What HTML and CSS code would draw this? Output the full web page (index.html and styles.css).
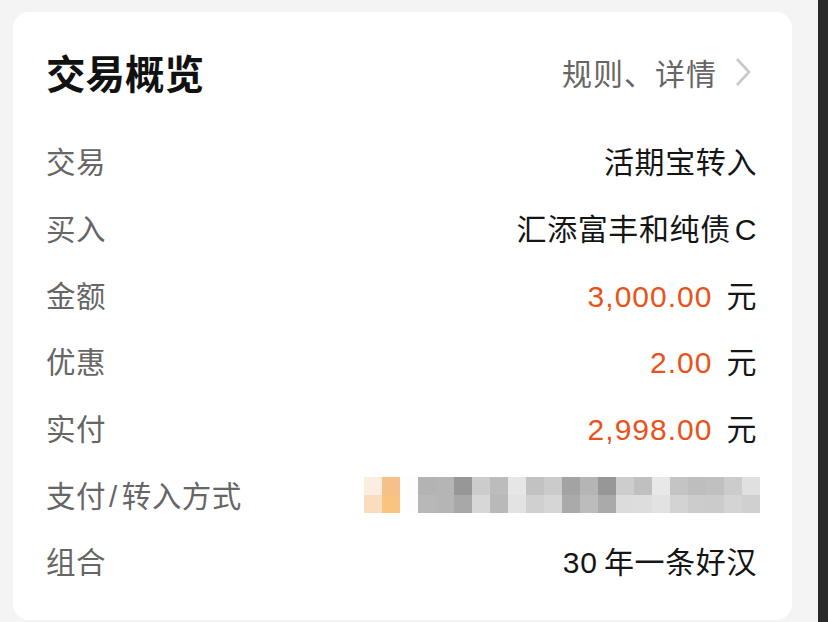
FILE: index.html
```html
<!DOCTYPE html>
<html lang="zh-CN">
<head>
<meta charset="utf-8">
<link rel="stylesheet" href="styles.css">
</head>
<body>
<div class="screen">
  <main class="main">
    <section class="card">
      <header class="card-head">
        <h1 class="title">交易概览</h1>
        <a class="more">规则、详情<svg class="chev" width="18" height="30" viewBox="0 0 18 30"><path d="M3 2 L15 15 L3 28" fill="none" stroke="#c9c9c9" stroke-width="2.6" stroke-linejoin="miter"/></svg></a>
      </header>
      <div class="rows">
        <div class="row"><span class="label">交易</span><span class="value">活期宝转入</span></div>
        <div class="row"><span class="label">买入</span><span class="value">汇添富丰和纯债<span class="latin">C</span></span></div>
        <div class="row"><span class="label">金额</span><span class="value"><span class="num">3,000.00</span>元</span></div>
        <div class="row"><span class="label">优惠</span><span class="value"><span class="num">2.00</span>元</span></div>
        <div class="row"><span class="label">实付</span><span class="value"><span class="num">2,998.00</span>元</span></div>
        <div class="row"><span class="label">支付<span class="slash">/</span>转入方式</span>
          <div class="mosaic">
            <span style="background:#fbeee0"></span><span style="background:#f5c08a"></span><span style="background:#fdfdfd"></span><span style="background:#b3b3b3"></span><span style="background:#b5b5b5"></span><span style="background:#979797"></span><span style="background:#cccccc"></span><span style="background:#bcbcbc"></span><span style="background:#e6e6e6"></span><span style="background:#c2c2c2"></span><span style="background:#cbcbcb"></span><span style="background:#a3a3a3"></span><span style="background:#b5b5b5"></span><span style="background:#979797"></span><span style="background:#cdcdcd"></span><span style="background:#c0c0c0"></span><span style="background:#e8e8e8"></span><span style="background:#c4c4c4"></span><span style="background:#bebebe"></span><span style="background:#c0c0c0"></span><span style="background:#cccccc"></span><span style="background:#e0e0e0"></span>
            <span style="background:#fadcc0"></span><span style="background:#f7c57f"></span><span style="background:#fdfdfd"></span><span style="background:#b8b8b8"></span><span style="background:#b5b5b5"></span><span style="background:#a8a8a8"></span><span style="background:#d7d7d7"></span><span style="background:#b9b9b9"></span><span style="background:#e3e3e3"></span><span style="background:#d0d0d0"></span><span style="background:#d6d6d6"></span><span style="background:#aaaaaa"></span><span style="background:#bcbcbc"></span><span style="background:#aaaaaa"></span><span style="background:#dcdcdc"></span><span style="background:#dddddd"></span><span style="background:#e2e2e2"></span><span style="background:#d3d3d3"></span><span style="background:#cccccc"></span><span style="background:#cbcbcb"></span><span style="background:#d4d4d4"></span><span style="background:#d0d0d0"></span>
          </div>
        </div>
        <div class="row"><span class="label">组合</span><span class="value"><span class="digits">30</span>年一条好汉</span></div>
      </div>
    </section>
  </main>
  <div class="edge"></div>
</div>
</body>
</html>
```

FILE: styles.css
```css
* { box-sizing: border-box; }
html, body { margin: 0; padding: 0; }
body {
  width: 828px;
  height: 622px;
  overflow: hidden;
  background: #f4f4f4;
  font-family: "Noto Sans CJK SC", "Noto Sans", sans-serif;
}
.screen {
  display: flex;
  height: 622px;
}
.main {
  width: 818px;
  padding: 12px 26px 2px 13px;
  background: #f4f4f4;
}
.edge {
  width: 10px;
  background: #2a2a2a;
}
.card {
  background: #ffffff;
  border-radius: 16px;
  height: 608px;
  padding: 34px 35px 0 33px;
}
.card-head {
  display: flex;
  align-items: center;
  justify-content: space-between;
  height: 52px;
  margin-bottom: 29px;
}
.title {
  margin: 0;
  font-size: 39.5px;
  font-weight: 700;
  color: #111111;
  line-height: 52px;
}
.more {
  display: flex;
  align-items: center;
  gap: 17px;
  font-size: 30px;
  color: #666666;
  letter-spacing: 1px;
  margin-right: 5px;
}
.chev { display: block; }
.rows {
  display: flex;
  flex-direction: column;
}
.row {
  display: flex;
  align-items: center;
  justify-content: space-between;
  height: 66.67px;
}
.label {
  font-size: 29.5px;
  color: #666666;
  letter-spacing: 0.5px;
}
.slash {
  font-family: "Liberation Sans", sans-serif;
  margin: 0 4px 0 3px;
}
.value {
  font-size: 30px;
  color: #151515;
  letter-spacing: 0.6px;
  white-space: pre;
}
.latin {
  font-family: "Liberation Sans", sans-serif;
  margin-left: 4px;
}
.num {
  font-family: "Liberation Sans", sans-serif;
  color: #e8531c;
  letter-spacing: 1px;
  margin-right: 14px;
}
.digits {
  font-family: "Liberation Sans", sans-serif;
  letter-spacing: 1px;
  margin-right: 6px;
}
.mosaic {
  display: grid;
  grid-template-columns: repeat(22, 18px);
  grid-auto-rows: 18px;
  margin-top: 3px;
  margin-right: -3px;
}
.mosaic span { display: block; }
```
